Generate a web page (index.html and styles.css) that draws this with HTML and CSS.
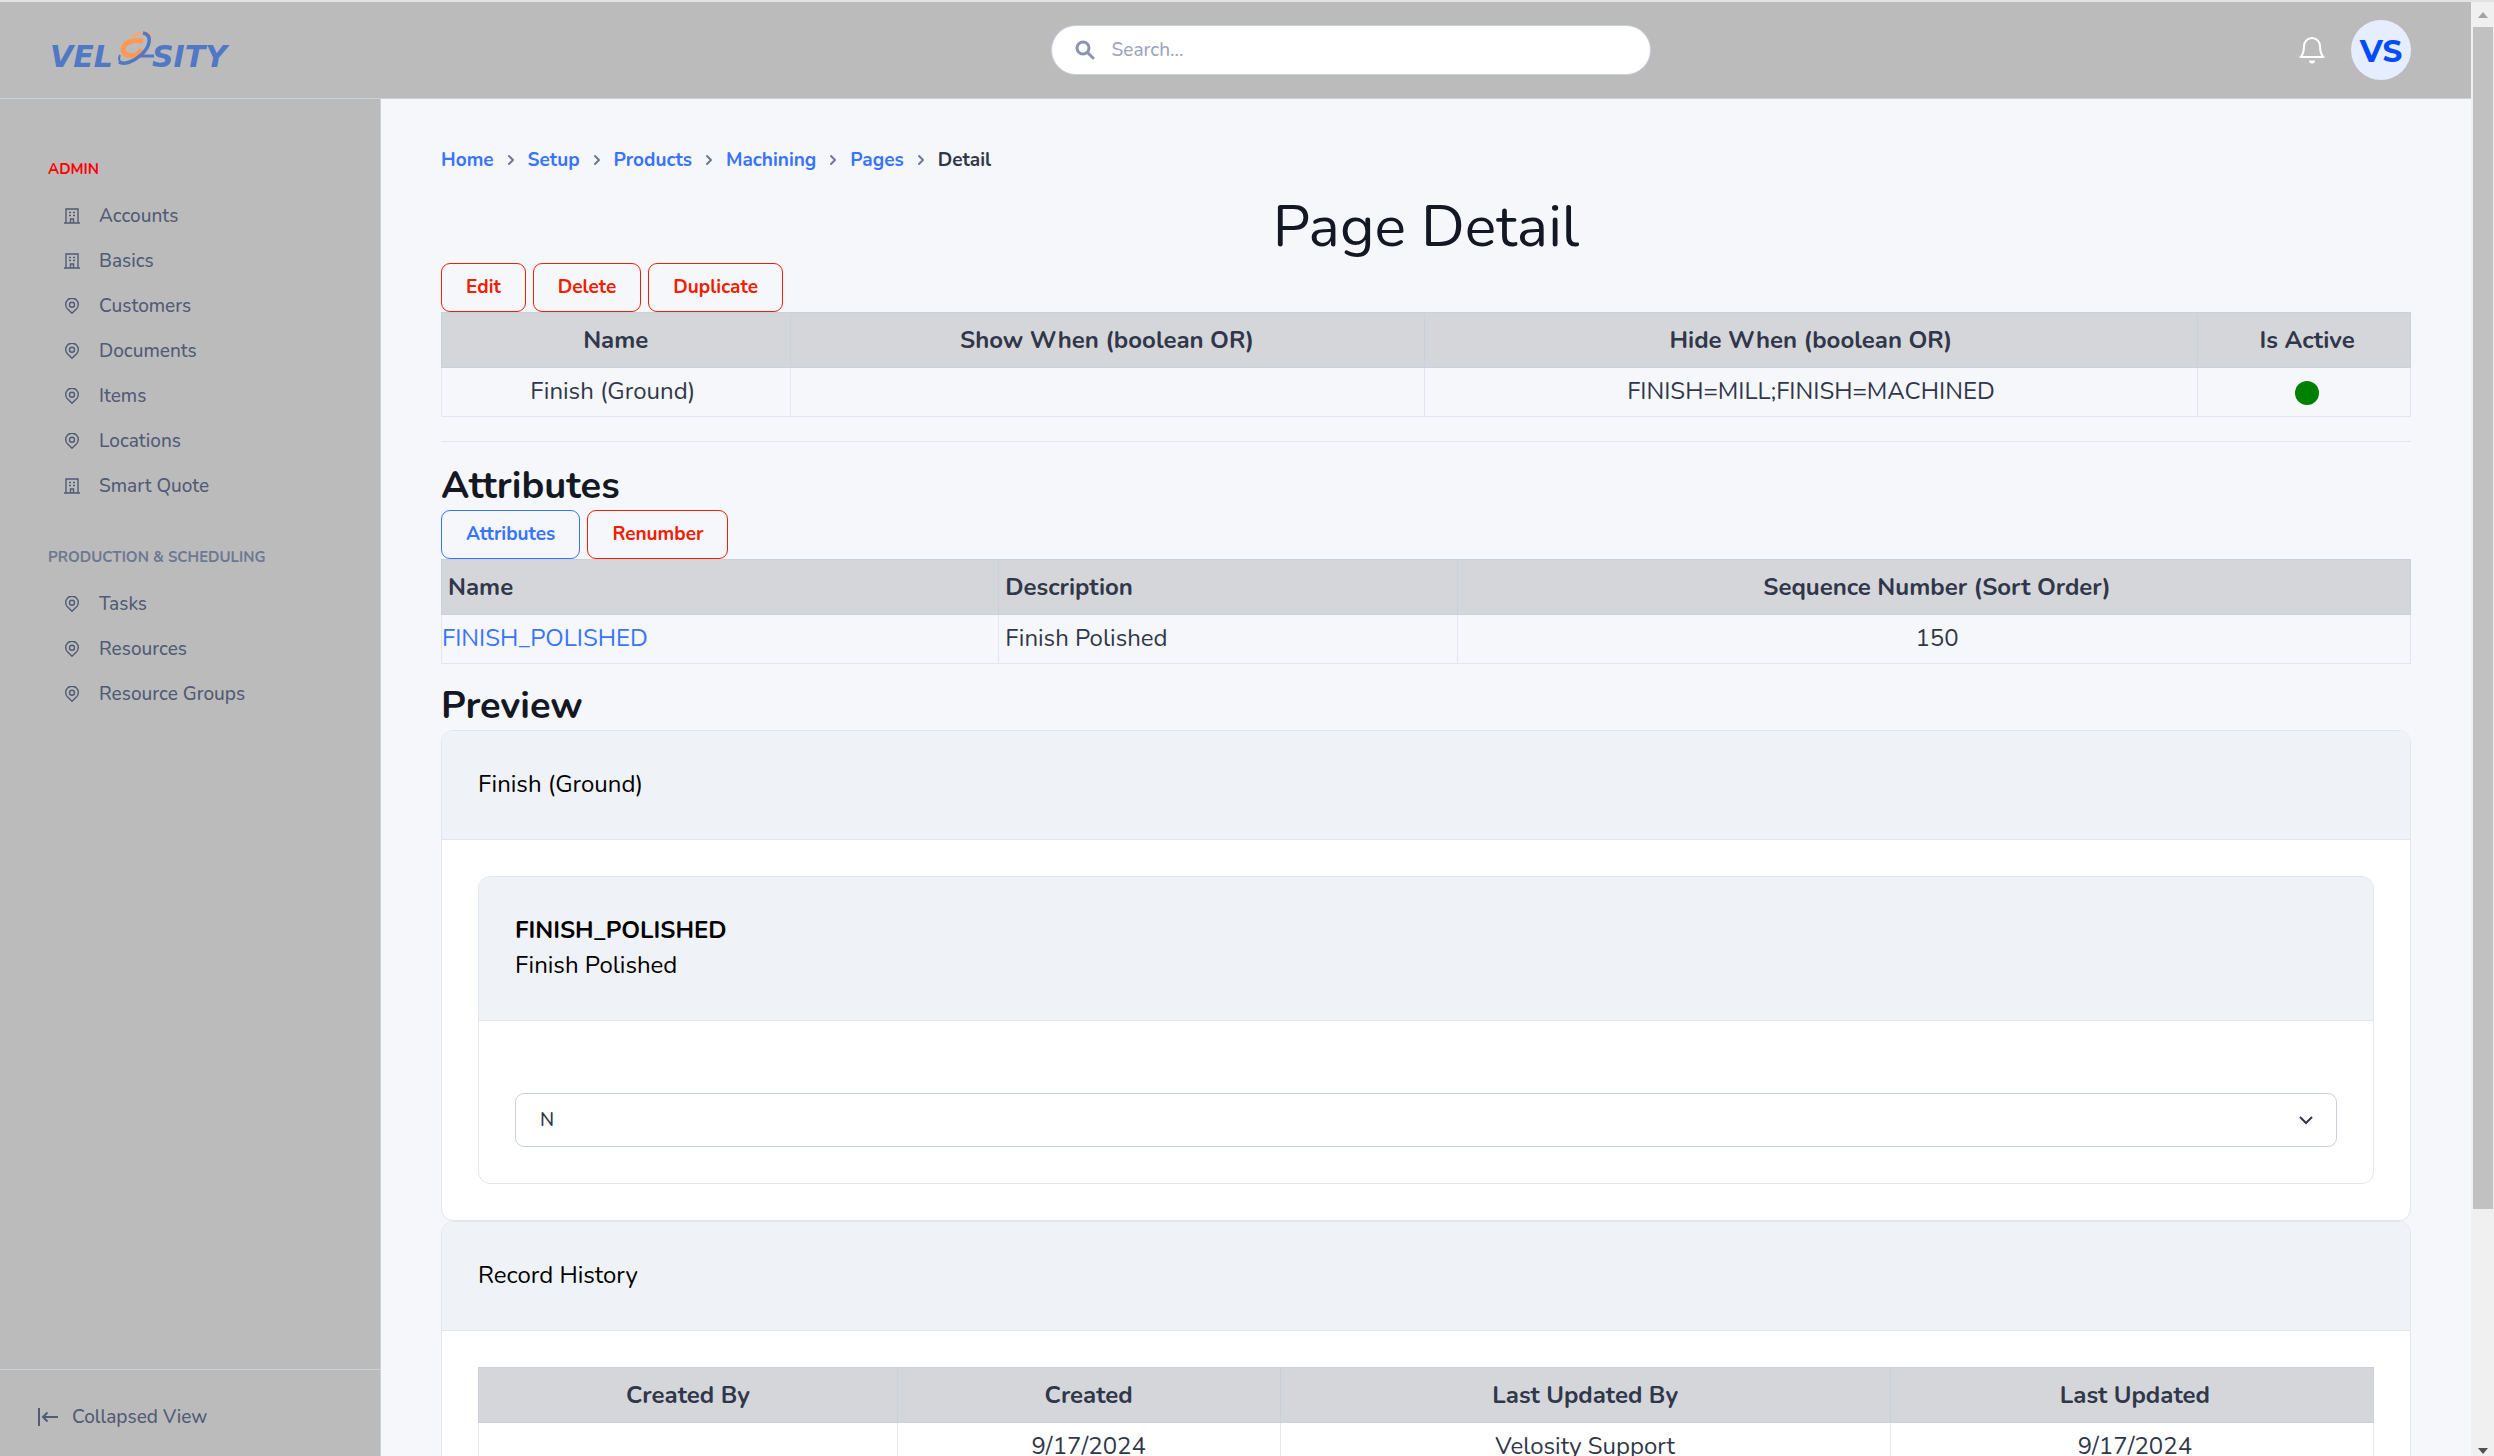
FILE: index.html
```html
<!DOCTYPE html>
<html lang="en">
<head>
<meta charset="utf-8">
<meta name="viewport" content="width=device-width, initial-scale=1">
<title>Page Detail</title>
<link rel="stylesheet" href="styles.css">
</head>
<body>
<svg class="sprite" aria-hidden="true">
  <symbol id="i-building" viewBox="0 0 16 16"><path d="M2 15V1h12v14M0 15h16M6.500 15v-4h3v4M5 4.500h2M9 4.500h2M5 7.500h2M9 7.500h2" fill="none" stroke="currentColor" stroke-width="1.400"/></symbol>
  <symbol id="i-pin" viewBox="0 0 16 16"><path d="M8 15.200 3.400 10.800a6.300 6.300 0 1 1 9.200 0z" fill="none" stroke="currentColor" stroke-width="1.400" stroke-linejoin="round"/><circle cx="8" cy="6.800" r="2.500" fill="none" stroke="currentColor" stroke-width="1.400"/></symbol>
  <symbol id="i-angle" viewBox="0 0 8 12"><path d="M2 2l4 4-4 4" fill="none" stroke="currentColor" stroke-width="2" stroke-linecap="round" stroke-linejoin="round"/></symbol>
</svg>
<div class="app">
  <div class="page">
    <header class="topbar">
      <a class="brand" href="#" aria-label="Velosity">
        <svg class="logo" viewBox="0 0 190 44" aria-hidden="true">
          <text x="2" y="39" class="logo-text">VEL</text>
          <text x="104" y="39" class="logo-text">SITY</text>
          <path d="M95 13.500C90 12 81 12 77 17c-4 6-1 11 8 10.500 4 0 7-3 9-6" fill="none" stroke="#ff9850" stroke-width="5"/>
          <path d="M84 9C92 3 104 3 102 9" fill="none" stroke="#f4a878" stroke-width="2.500"/>
          <path d="M95 5c10 2 7 14-2 22-8 7-17 10-22 7" fill="none" stroke="#5078c4" stroke-width="3.500"/>
          <path d="M72 27c-2 4-1 8 4 8" fill="none" stroke="#5078c4" stroke-width="2"/>
          <path d="M92 28h14" fill="none" stroke="#5078c4" stroke-width="3"/>
        </svg>
      </a>
      <label class="search">
        <svg class="search-icon" viewBox="0 0 20 20" aria-hidden="true"><circle cx="8" cy="8" r="6" fill="none" stroke="currentColor" stroke-width="3"/><path d="M12.500 12.500l5.500 5.500" stroke="currentColor" stroke-width="3" stroke-linecap="round"/></svg>
        <input class="search-input" type="search" placeholder="Search..." aria-label="Search">
      </label>
      <div class="tools">
        <button class="bell" type="button" aria-label="Notifications">
          <svg viewBox="0 0 26 28" aria-hidden="true"><path d="M1.500 21c2.800-2.500 3.500-5 3.500-11a8 8 0 0 1 16 0c0 6 .7 8.500 3.500 11z" fill="none" stroke="currentColor" stroke-width="2" stroke-linejoin="round"/><path d="M10 24.500h6a3 3 0 0 1-6 0z" fill="currentColor"/></svg>
        </button>
        <button class="avatar" type="button">VS</button>
      </div>
    </header>
    <div class="columns">
      <aside class="sidebar">
        <nav class="nav">
          <h2 class="nav-title nav-title-admin">ADMIN</h2>
          <ul class="nav-list">
            <li><a class="nav-link" href="#"><svg class="nav-icon"><use href="#i-building"/></svg>Accounts</a></li>
            <li><a class="nav-link" href="#"><svg class="nav-icon"><use href="#i-building"/></svg>Basics</a></li>
            <li><a class="nav-link" href="#"><svg class="nav-icon"><use href="#i-pin"/></svg>Customers</a></li>
            <li><a class="nav-link" href="#"><svg class="nav-icon"><use href="#i-pin"/></svg>Documents</a></li>
            <li><a class="nav-link" href="#"><svg class="nav-icon"><use href="#i-pin"/></svg>Items</a></li>
            <li><a class="nav-link" href="#"><svg class="nav-icon"><use href="#i-pin"/></svg>Locations</a></li>
            <li><a class="nav-link" href="#"><svg class="nav-icon"><use href="#i-building"/></svg>Smart Quote</a></li>
          </ul>
          <h2 class="nav-title">PRODUCTION &amp; SCHEDULING</h2>
          <ul class="nav-list">
            <li><a class="nav-link" href="#"><svg class="nav-icon"><use href="#i-pin"/></svg>Tasks</a></li>
            <li><a class="nav-link" href="#"><svg class="nav-icon"><use href="#i-pin"/></svg>Resources</a></li>
            <li><a class="nav-link" href="#"><svg class="nav-icon"><use href="#i-pin"/></svg>Resource Groups</a></li>
          </ul>
        </nav>
        <button class="collapse" type="button">
          <svg class="collapse-icon" viewBox="0 0 20 18" aria-hidden="true"><path d="M1 0v18" stroke="currentColor" stroke-width="2"/><path d="M20 9H5M9.500 4.500 5 9l4.500 4.500" fill="none" stroke="currentColor" stroke-width="2"/></svg>
          Collapsed View
        </button>
      </aside>
      <main class="main">
        <nav aria-label="Breadcrumb">
          <ol class="crumbs">
            <li><a href="#">Home</a><svg class="crumb-sep"><use href="#i-angle"/></svg></li>
            <li><a href="#">Setup</a><svg class="crumb-sep"><use href="#i-angle"/></svg></li>
            <li><a href="#">Products</a><svg class="crumb-sep"><use href="#i-angle"/></svg></li>
            <li><a href="#">Machining</a><svg class="crumb-sep"><use href="#i-angle"/></svg></li>
            <li><a href="#">Pages</a><svg class="crumb-sep"><use href="#i-angle"/></svg></li>
            <li aria-current="page">Detail</li>
          </ol>
        </nav>
        <h1 class="title">Page Detail</h1>
        <div class="actions">
          <button class="btn btn-danger" type="button">Edit</button>
          <button class="btn btn-danger" type="button">Delete</button>
          <button class="btn btn-danger" type="button">Duplicate</button>
        </div>
        <table class="table table-page">
          <colgroup><col class="page-name"><col class="page-show"><col class="page-hide"><col></colgroup>
          <thead><tr><th scope="col">Name</th><th scope="col">Show When (boolean OR)</th><th scope="col">Hide When (boolean OR)</th><th scope="col">Is Active</th></tr></thead>
          <tbody><tr><td class="name">Finish (Ground)</td><td></td><td>FINISH=MILL;FINISH=MACHINED</td><td><span class="dot" role="img" aria-label="Active"></span></td></tr></tbody>
        </table>
        <hr class="rule">
        <h2 class="heading">Attributes</h2>
        <div class="actions">
          <button class="btn btn-primary" type="button">Attributes</button>
          <button class="btn btn-danger" type="button">Renumber</button>
        </div>
        <table class="table table-attributes">
          <colgroup><col class="attr-name"><col class="attr-desc"><col></colgroup>
          <thead><tr><th scope="col" class="start">Name</th><th scope="col" class="start">Description</th><th scope="col">Sequence Number (Sort Order)</th></tr></thead>
          <tbody><tr><td class="link-cell"><a href="#">FINISH_POLISHED</a></td><td class="start">Finish Polished</td><td>150</td></tr></tbody>
        </table>
        <h2 class="heading">Preview</h2>
        <section class="card">
          <header class="card-header">Finish (Ground)</header>
          <div class="card-body">
            <section class="card">
              <header class="card-header"><strong>FINISH_POLISHED</strong><br>Finish Polished</header>
              <div class="card-body card-field">
                <select class="select" aria-label="Finish Polished"><option>N</option><option>Y</option></select>
              </div>
            </section>
          </div>
        </section>
        <section class="card">
          <header class="card-header">Record History</header>
          <div class="card-body">
            <table class="table">
              <colgroup><col class="hist-by"><col class="hist-on"><col class="hist-upby"><col></colgroup>
              <thead><tr><th scope="col">Created By</th><th scope="col">Created</th><th scope="col">Last Updated By</th><th scope="col">Last Updated</th></tr></thead>
              <tbody><tr><td></td><td>9/17/2024</td><td>Velosity Support</td><td>9/17/2024</td></tr></tbody>
            </table>
          </div>
        </section>
      </main>
    </div>
  </div>
  <div class="scrollbar" aria-hidden="true">
    <svg class="arrow arrow-up" viewBox="0 0 10 6"><path d="M0 6l5-6 5 6z" fill="currentColor"/></svg>
    <div class="thumb"></div>
    <svg class="arrow arrow-down" viewBox="0 0 10 6"><path d="M0 0h10L5 6z" fill="currentColor"/></svg>
  </div>
</div>
</body>
</html>
```
FILE: styles.css
```css
*, *::before, *::after { box-sizing: border-box; }

body {
  margin: 0;
  background: #f5f7fb;
  color: #31374a;
  font: 400 24px/36px Nunito, "Nunito Sans", Lato, sans-serif;
}

a { color: #3874ff; text-decoration: none; }
button { font: inherit; cursor: pointer; }
ul, ol { list-style: none; margin: 0; padding: 0; }
.sprite { display: none; }

/* Shell */
.app {
  display: flex;
  height: 100vh;
  overflow: hidden;
  border-top: 2px solid #e3e3e3;
}
.page { flex: 1; min-width: 0; display: flex; flex-direction: column; }
.columns { flex: 1; min-height: 0; display: flex; }

/* Top bar */
.topbar {
  flex: none;
  display: flex;
  align-items: center;
  justify-content: space-between;
  height: 97px;
  padding: 0 60px 0 48px;
  background: #bbb;
  border-bottom: 1px solid #cbd0dd;
}
.brand { width: 354px; }
.logo { display: block; width: 190px; height: 44px; }
.logo-text { font: italic bold 30px "DejaVu Sans", sans-serif; fill: #5078c4; }
.search { position: relative; width: 600px; }
.search-icon {
  position: absolute;
  left: 24px;
  top: 15px;
  width: 20px;
  height: 20px;
  color: #8a94ad;
}
.search-input {
  display: block;
  width: 100%;
  height: 50px;
  padding: 0 24px 0 60px;
  border: 1px solid #cbd0dd;
  border-radius: 25px;
  background: #fff;
  font: 500 19px/28px Nunito, "Nunito Sans", Lato, sans-serif;
}
.search-input::placeholder { color: #9fa6bc; opacity: 1; }
.tools { display: flex; align-items: center; gap: 26px; }
.bell { display: block; padding: 0; border: 0; background: none; color: #fff; }
.bell svg { display: block; width: 26px; height: 28px; }
.avatar {
  width: 60px;
  height: 60px;
  padding: 2px 0 0;
  border: 0;
  border-radius: 50%;
  background: #e5edff;
  color: #004dff;
  font: 700 31px/58px Montserrat, Nunito, sans-serif;
}

/* Sidebar */
.sidebar {
  flex: none;
  display: flex;
  flex-direction: column;
  width: 381px;
  background: #bbb;
  border-right: 1px solid #cbd0dd;
  color: #525b75;
}
.nav { flex: 1; padding: 58px 48px 0; }
.nav-title {
  margin: 0 0 12px;
  color: #6e7891;
  font-size: 15px;
  font-weight: 700;
  line-height: 24px;
}
.nav-title-admin { color: #f00; }
.nav-list + .nav-title { margin-top: 37px; }
.nav-link {
  display: flex;
  align-items: center;
  gap: 19px;
  height: 45px;
  padding-left: 16px;
  color: inherit;
  font-size: 19px;
  font-weight: 500;
}
.nav-icon { width: 16px; height: 16px; }
.collapse {
  display: flex;
  align-items: center;
  gap: 14px;
  padding: 32px 38px 24px;
  border: 0;
  border-top: 1px solid #cbd0dd;
  background: none;
  color: inherit;
  font-size: 19px;
  font-weight: 500;
  line-height: 30px;
}
.collapse-icon { width: 20px; height: 18px; }

/* Main column */
.main { flex: 1; min-width: 0; padding: 47px 60px; overflow: hidden; }
.crumbs { display: flex; font-size: 19px; font-weight: 700; line-height: 28px; }
.crumbs li { display: flex; align-items: center; }
.crumb-sep { width: 8px; height: 12px; margin: 0 13px; color: #6e7891; }
.title {
  margin: 17px 0 0;
  color: #141824;
  font-size: 59px;
  font-weight: 400;
  line-height: 72px;
  text-align: center;
}
.heading {
  margin: 20px 0 0;
  padding-bottom: 2px;
  color: #141824;
  font-size: 38px;
  font-weight: 700;
  line-height: 44px;
}
.rule { height: 1px; margin: 24px 0 22px; border: 0; background: #e3e6ed; }
.rule + .heading { margin-top: 0; }

.actions { display: flex; gap: 7px; }
.btn {
  height: 49px;
  padding: 0 24px 2px;
  border: 1px solid;
  border-radius: 9px;
  background: none;
  font-size: 19px;
  font-weight: 700;
  line-height: 28px;
}
.btn-danger { color: #ed2000; }
.btn-primary { color: #3874ff; }

/* Tables */
.table { width: 100%; table-layout: fixed; border-collapse: collapse; text-align: center; }
.table th {
  padding: 9px 6px;
  border: 1px solid #cbd0dd;
  background: #d5d6d9;
  font-weight: 700;
}
.table td { height: 49px; padding: 5px 6px 7px; border: 1px solid #e3e6ed; }
.table th:last-child, .table td:last-child { padding-right: 0; }
.table .start { text-align: left; }
.table .link-cell { padding-left: 0; text-align: left; }
.table .name { padding-right: 12px; }
.page-name { width: 17.7%; }
.page-show { width: 32.2%; }
.page-hide { width: 39.3%; }
.attr-name { width: 28.3%; }
.attr-desc { width: 23.3%; }
.hist-by { width: 22.1%; }
.hist-on { width: 20.2%; }
.hist-upby { width: 32.2%; }
.dot { display: block; width: 24px; height: 24px; margin: 4px auto 0; border-radius: 50%; background: #008000; }

/* Cards */
.card { border: 1px solid #e3e6ed; border-radius: 12px; background: #fff; }
.card-header {
  padding: 36px 36px 37px;
  border-bottom: 1px solid #e3e6ed;
  border-radius: 11px 11px 0 0;
  background: #eff2f6;
  color: #000;
  line-height: 35px;
}
.card-header strong { font-weight: 700; }
.card-body { padding: 36px; }
.card-field { padding-top: 72px; }
.select {
  display: block;
  width: 100%;
  height: 54px;
  padding: 0 24px;
  border: 1px solid #cbd0dd;
  border-radius: 9px;
  appearance: none;
  background: #fff url("data:image/svg+xml,%3Csvg xmlns='http://www.w3.org/2000/svg' viewBox='0 0 14 10'%3E%3Cpath d='M1 2l6 6 6-6' fill='none' stroke='%2331374a' stroke-width='2'/%3E%3C/svg%3E") no-repeat right 23px center / 14px 10px;
  color: #31374a;
  font: 500 19px/28px Nunito, "Nunito Sans", Lato, sans-serif;
}

/* Scroll track */
.scrollbar {
  flex: none;
  display: flex;
  flex-direction: column;
  align-items: center;
  width: 23px;
  padding: 10px 1px 2px 2px;
  background: #f0f0f0;
}
.arrow { flex: none; width: 10px; height: 6px; }
.arrow-up { margin-bottom: 9px; color: #a3a3a3; }
.arrow-down { margin-top: auto; color: #505050; }
.thumb { width: 100%; height: 82%; background: #c1c1c1; }
```
